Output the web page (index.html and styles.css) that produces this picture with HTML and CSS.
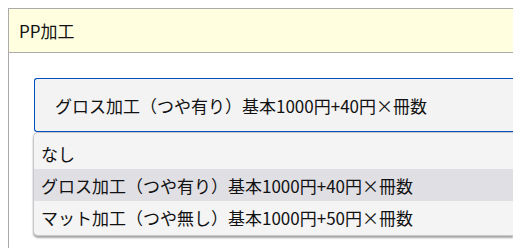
FILE: index.html
```html
<!DOCTYPE html>
<html lang="ja">
<head>
<meta charset="utf-8">
<link rel="stylesheet" href="styles.css">
</head>
<body>
<div class="panel">
  <div class="panel-head">PP加工</div>
  <div class="panel-body">
    <div class="select-wrap">
      <div class="select">グロス加工（つや有り）基本1000円+40円×冊数</div>
      <ul class="dropdown">
        <li class="opt">なし</li>
        <li class="opt active">グロス加工（つや有り）基本1000円+40円×冊数</li>
        <li class="opt">マット加工（つや無し）基本1000円+50円×冊数</li>
      </ul>
    </div>
  </div>
</div>
</body>
</html>
```
FILE: styles.css
```css
html, body {
  margin: 0;
  padding: 0;
  background: #fff;
  overflow: hidden;
}
body {
  font-family: "Noto Sans CJK JP", "Noto Sans", sans-serif;
  font-size: 17px;
  color: #111;
  width: 513px;
  height: 248px;
}
.panel {
  margin: 8px 0 0 8px;
  height: 240px;
  border: 1px solid #aaa;
  border-right: none;
  border-bottom: none;
  box-sizing: border-box;
}
.panel-head {
  height: 43px;
  background: #ffffe0;
  border-bottom: 1px solid #aaa;
  padding-left: 10px;
  display: flex;
  align-items: center;
  line-height: 1;
}
.panel-body {
  padding: 25px 0 0 25px;
}
.select-wrap {
  position: relative;
}
.select {
  height: 54px;
  box-sizing: border-box;
  border: 1px solid #0050c0;
  border-right: none;
  border-radius: 3px 0 0 3px;
  background: #f3f3f3;
  padding-left: 20px;
  display: flex;
  align-items: center;
  line-height: 1;
}
.dropdown {
  position: absolute;
  top: 54px;
  left: -1px;
  right: 0;
  margin: 0;
  padding: 4px 0 2px;
  list-style: none;
  background: #f4f4f4;
  border: 1px solid #c8c8cc;
  border-right: none;
  border-radius: 5px 0 0 5px;
  box-shadow: 0 2px 2px rgba(0,0,0,0.35);
}
.opt {
  height: 32px;
  padding-left: 7px;
  display: flex;
  align-items: center;
  line-height: 1;
}
.opt.active {
  background: #e0dfe4;
}
```
